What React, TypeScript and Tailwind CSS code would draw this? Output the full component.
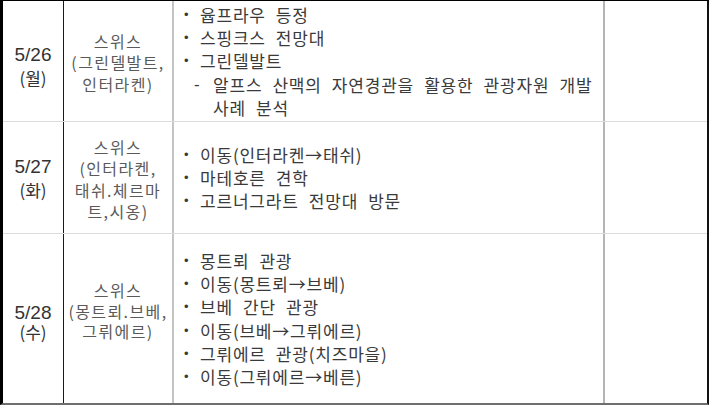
const KR = "font-['Noto_Sans_CJK_KR','Noto_Sans',sans-serif]";

type Item = { text: string; sub?: string[] };

interface DayRow {
  date: string;
  weekday: string;
  place: string[];
  items: Item[];
  height: string;
  dateBox: string;
  placeBox: string;
}

const ROWS: DayRow[] = [
  {
    date: "5/26",
    weekday: "(월)",
    place: ["스위스", "(그린델발트,", "인터라켄)"],
    items: [
      { text: "윱프라우 등정" },
      { text: "스핑크스 전망대" },
      {
        text: "그린델발트",
        sub: ["알프스 산맥의 자연경관을 활용한 관광자원 개발", "사례 분석"],
      },
    ],
    height: "h-[121px]",
    dateBox: "pt-[10px] leading-[23px]",
    placeBox: "pt-[4px] leading-[21.5px]",
  },
  {
    date: "5/27",
    weekday: "(화)",
    place: ["스위스", "(인터라켄,", "태쉬.체르마", "트,시옹)"],
    items: [
      { text: "이동(인터라켄→태쉬)" },
      { text: "마테호른 견학" },
      { text: "고르너그라트 전망대 방문" },
    ],
    height: "h-[112px]",
    dateBox: "pt-[1px] leading-[23px]",
    placeBox: "pt-[4px] leading-[21.5px]",
  },
  {
    date: "5/28",
    weekday: "(수)",
    place: ["스위스", "(몽트뢰.브베,", "그뤼에르)"],
    items: [
      { text: "몽트뢰 관광" },
      { text: "이동(몽트뢰→브베)" },
      { text: "브베 간단 관광" },
      { text: "이동(브베→그뤼에르)" },
      { text: "그뤼에르 관광(치즈마을)" },
      { text: "이동(그뤼에르→베른)" },
    ],
    height: "h-[169px]",
    dateBox: "pt-[7px] leading-[19px]",
    placeBox: "pb-[15px] leading-[20.5px]",
  },
];

function Row({ row, last }: { row: DayRow; last: boolean }) {
  return (
    <div
      className={`grid grid-cols-[61px_110px_431px_1fr] ${row.height} ${
        last ? "" : "border-b border-[#dcdcdc]"
      }`}
    >
      {/* Date */}
      <div
        className={`flex flex-col items-center justify-center border-r border-[#1a1a1a] text-[19px] text-[#333] ${row.dateBox}`}
      >
        <span className="font-['Liberation_Sans',sans-serif]">{row.date}</span>
        <span className={KR + " text-[17px]"}>{row.weekday}</span>
      </div>

      {/* Place */}
      <div
        className={`flex flex-col items-center justify-center border-r-2 border-[#c4c4c4] text-[16px] tracking-[1.4px] text-[#5a5a5a] ${KR} ${row.placeBox}`}
      >
        {row.place.map((p) => (
          <span key={p}>{p}</span>
        ))}
      </div>

      {/* Schedule */}
      <div
        className={`flex flex-col justify-center border-r-2 border-[#b4b4b4] pl-[10px] text-[17px] leading-[23.3px] tracking-[0.8px] [word-spacing:5.5px] text-[#3a3a3a] ${KR}`}
      >
        {row.items.map((it) => (
          <div key={it.text}>
            <div className="flex">
              <span className="w-[16px] font-['Liberation_Sans',sans-serif] text-[13px]">•</span>
              <span>{it.text}</span>
            </div>
            {it.sub && (
              <div className="flex pl-[10px]">
                <span className="w-[19px] font-['Liberation_Sans',sans-serif]">-</span>
                <div className="flex flex-col">
                  {it.sub.map((s) => (
                    <span key={s}>{s}</span>
                  ))}
                </div>
              </div>
            )}
          </div>
        ))}
      </div>

      {/* Notes */}
      <div />
    </div>
  );
}

export default function App() {
  return (
    <div className="h-[405px] w-[710px] bg-white">
      <div className="w-[709px] border-t border-l-[3px] border-r-2 border-b-2 border-t-black border-l-black border-r-[#111] border-b-[#6e6e6e]">
        {ROWS.map((r, i) => (
          <Row key={r.date} row={r} last={i === ROWS.length - 1} />
        ))}
      </div>
    </div>
  );
}
